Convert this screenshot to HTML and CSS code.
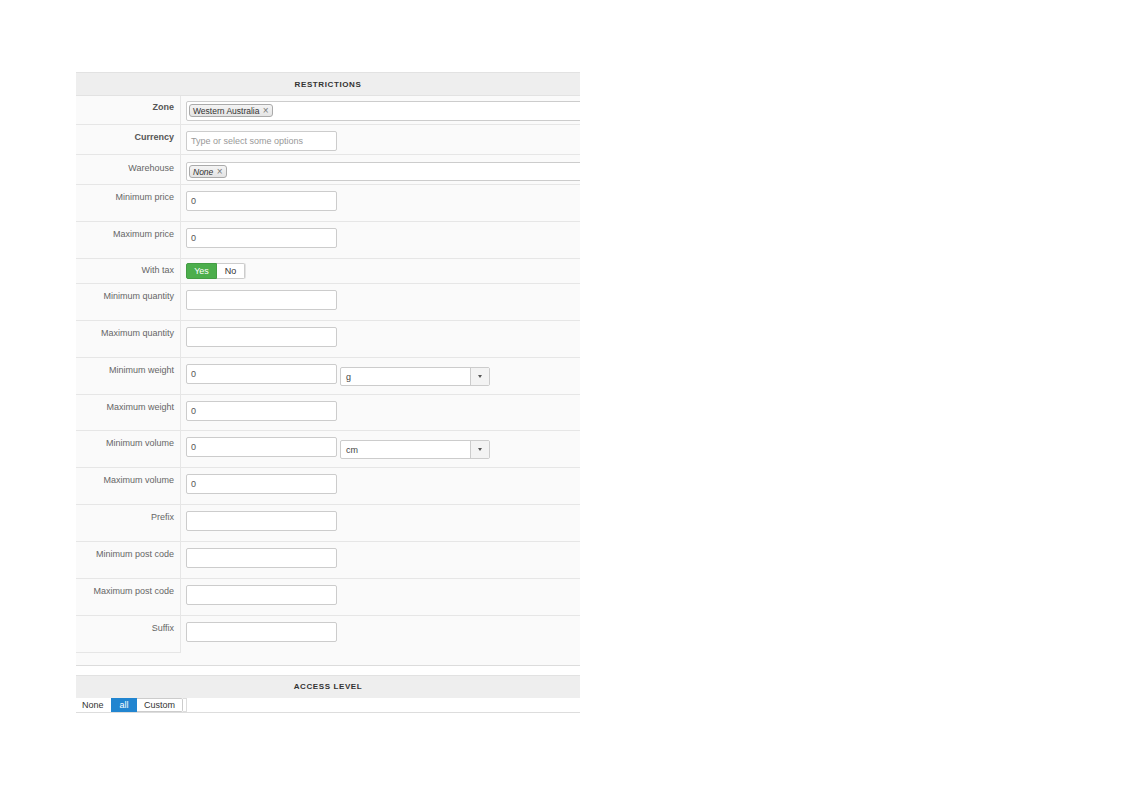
FILE: index.html
```html
<!DOCTYPE html>
<html>
<head>
<meta charset="utf-8">
<link rel="stylesheet" href="styles.css">
</head>
<body>
<div class="panel">
  <div class="section-head">RESTRICTIONS</div>
  <div class="rows">
    <div class="row row-zone">
      <div class="label bold">Zone</div>
      <div class="field">
        <div class="chosen-multi"><span class="tag">Western Australia <span class="x">×</span></span></div>
      </div>
    </div>
    <div class="row row-cur">
      <div class="label bold">Currency</div>
      <div class="field"><div class="input placeholder">Type or select some options</div></div>
    </div>
    <div class="row row-wh">
      <div class="label">Warehouse</div>
      <div class="field">
        <div class="chosen-multi short"><span class="tag italic">None <span class="x">×</span></span></div>
      </div>
    </div>
    <div class="row">
      <div class="label">Minimum price</div>
      <div class="field"><div class="input">0</div></div>
    </div>
    <div class="row">
      <div class="label">Maximum price</div>
      <div class="field"><div class="input">0</div></div>
    </div>
    <div class="row row-tax">
      <div class="label">With tax</div>
      <div class="field">
        <div class="switch"><span class="sw-on">Yes</span><span class="sw-off">No</span></div>
      </div>
    </div>
    <div class="row">
      <div class="label">Minimum quantity</div>
      <div class="field"><div class="input"></div></div>
    </div>
    <div class="row">
      <div class="label">Maximum quantity</div>
      <div class="field"><div class="input"></div></div>
    </div>
    <div class="row">
      <div class="label">Minimum weight</div>
      <div class="field">
        <div class="input">0</div>
        <div class="select"><span class="sel-text">g</span><span class="sel-arrow"><span class="caret"></span></span></div>
      </div>
    </div>
    <div class="row row-36">
      <div class="label">Maximum weight</div>
      <div class="field"><div class="input">0</div></div>
    </div>
    <div class="row">
      <div class="label">Minimum volume</div>
      <div class="field">
        <div class="input">0</div>
        <div class="select"><span class="sel-text">cm</span><span class="sel-arrow"><span class="caret"></span></span></div>
      </div>
    </div>
    <div class="row">
      <div class="label">Maximum volume</div>
      <div class="field"><div class="input">0</div></div>
    </div>
    <div class="row">
      <div class="label">Prefix</div>
      <div class="field"><div class="input"></div></div>
    </div>
    <div class="row">
      <div class="label">Minimum post code</div>
      <div class="field"><div class="input"></div></div>
    </div>
    <div class="row">
      <div class="label">Maximum post code</div>
      <div class="field"><div class="input"></div></div>
    </div>
    <div class="row row-last">
      <div class="label">Suffix</div>
      <div class="field"><div class="input"></div></div>
    </div>
  </div>
  <div class="section-foot"></div>
  <div class="gap"></div>
  <div class="section-head head-access">ACCESS LEVEL</div>
  <div class="btn-row">
    <span class="btn">None</span><span class="btn active">all</span><span class="btn last">Custom</span><span class="btn-stub"></span>
  </div>
</div>
</body>
</html>
```

FILE: styles.css
```css
html, body {
  margin: 0;
  padding: 0;
  background: #ffffff;
}

body {
  font-family: "Liberation Sans", Arial, Helvetica, sans-serif;
  font-size: 9px;
  color: #555;
}

.panel {
  margin: 72px 0 0 76px;
  width: 504px;
  overflow: hidden;
}

.section-head {
  box-sizing: border-box;
  height: 24px;
  background: #eeeeee;
  border-top: 1px solid #e2e2e2;
  border-bottom: 1px solid #e2e2e2;
  text-align: center;
  font-weight: bold;
  font-size: 8px;
  letter-spacing: 0.6px;
  color: #333;
  line-height: 23px;
}

.head-access {
  height: 23px;
  border-bottom: none;
  line-height: 22px;
}

.rows {
  background: #fafafa;
}

.row {
  box-sizing: border-box;
  display: flex;
  height: 37px;
  border-bottom: 1px solid #e6e6e6;
  overflow: hidden;
}

.row-zone { height: 29px; }
.row-cur { height: 30px; }
.row-wh { height: 30px; }
.row-tax { height: 25px; }
.row-36 { height: 36px; }

.row-last {
  border-bottom: none;
}

.label {
  box-sizing: border-box;
  flex: 0 0 105px;
  border-right: 1px solid #e6e6e6;
  text-align: right;
  padding: 7px 6px 0 0;
  line-height: 11px;
  color: #666;
  white-space: nowrap;
}

.row-last .label {
  border-bottom: 1px solid #e6e6e6;
}

.label.bold {
  font-weight: bold;
  color: #555;
}

.row-zone .label { padding-top: 6px; }
.row-cur .label { padding-top: 7px; }
.row-wh .label { padding-top: 8px; }
.row-tax .label { padding-top: 6px; }

.field {
  flex: 1;
  display: flex;
  align-items: flex-start;
  padding: 6px 0 0 5px;
  min-width: 0;
}

.row-zone .field { padding-top: 5px; }
.row-wh .field { padding-top: 7px; }
.row-tax .field { padding-top: 4px; }

.input {
  box-sizing: border-box;
  width: 151px;
  height: 20px;
  background: #fff;
  border: 1px solid #cccccc;
  border-radius: 2px;
  padding: 0 4px;
  line-height: 18px;
  color: #555;
  flex: none;
}

.input.placeholder {
  color: #999;
}

.chosen-multi {
  box-sizing: border-box;
  flex: none;
  width: 430px;
  height: 20px;
  background: #fff;
  border: 1px solid #cccccc;
  border-radius: 2px;
  padding: 2px 0 0 2px;
}

.chosen-multi.short {
  height: 19px;
}

.tag {
  display: inline-block;
  box-sizing: border-box;
  height: 13px;
  line-height: 11px;
  padding: 0 3px 0 3px;
  border: 1px solid #aaaaaa;
  border-radius: 3px;
  background: linear-gradient(#f4f4f4, #e4e4e4);
  color: #333;
  font-size: 8.5px;
}

.tag.italic {
  font-style: italic;
}

.tag .x {
  font-style: normal;
  color: #777;
  font-size: 10px;
  margin-left: 1px;
}

.switch {
  display: flex;
  height: 16px;
  box-sizing: border-box;
  border-radius: 2px;
  box-shadow: 1px 0 0 #e2e2e2;
}

.sw-on {
  box-sizing: border-box;
  width: 31px;
  height: 16px;
  background: #4cae4c;
  border: 1px solid #449d44;
  border-radius: 2px 0 0 2px;
  color: #fff;
  text-align: center;
  line-height: 14px;
}

.sw-off {
  box-sizing: border-box;
  width: 28px;
  height: 16px;
  background: #fff;
  border: 1px solid #cccccc;
  border-left: none;
  border-radius: 0 2px 2px 0;
  color: #333;
  text-align: center;
  line-height: 14px;
}

.select {
  box-sizing: border-box;
  flex: none;
  display: flex;
  width: 150px;
  height: 19px;
  margin: 3px 0 0 3px;
  background: #fff;
  border: 1px solid #cccccc;
  border-radius: 2px;
}

.sel-text {
  flex: 1;
  padding-left: 5px;
  line-height: 19px;
  color: #444;
}

.sel-arrow {
  width: 18px;
  border-left: 1px solid #cccccc;
  background: #f3f3f3;
  display: flex;
  align-items: center;
  justify-content: center;
}

.caret {
  width: 0;
  height: 0;
  border-left: 2.5px solid transparent;
  border-right: 2.5px solid transparent;
  border-top: 3px solid #555;
}

.section-foot {
  box-sizing: border-box;
  height: 13px;
  background: #fafafa;
  border-bottom: 1px solid #dcdcdc;
}

.gap {
  height: 9px;
}

.btn-row {
  box-sizing: border-box;
  display: flex;
  height: 15px;
  border-bottom: 1px solid #dddddd;
  background: #fff;
}

.btn {
  box-sizing: border-box;
  height: 14px;
  line-height: 14px;
  padding: 0 6px;
  color: #333;
  background: #fff;
}

.btn:first-child {
  width: 35px;
}

.btn.active {
  width: 26px;
  background: #2185d0;
  color: #fff;
  text-align: center;
  padding: 0;
}

.btn.last {
  width: 46px;
  text-align: center;
  padding: 0;
  border: 1px solid #cccccc;
  border-left: none;
  border-radius: 0 2px 2px 0;
  line-height: 12px;
}

.btn-stub {
  box-sizing: border-box;
  width: 4px;
  height: 14px;
  border: 1px solid #dddddd;
  border-left: none;
}
```
